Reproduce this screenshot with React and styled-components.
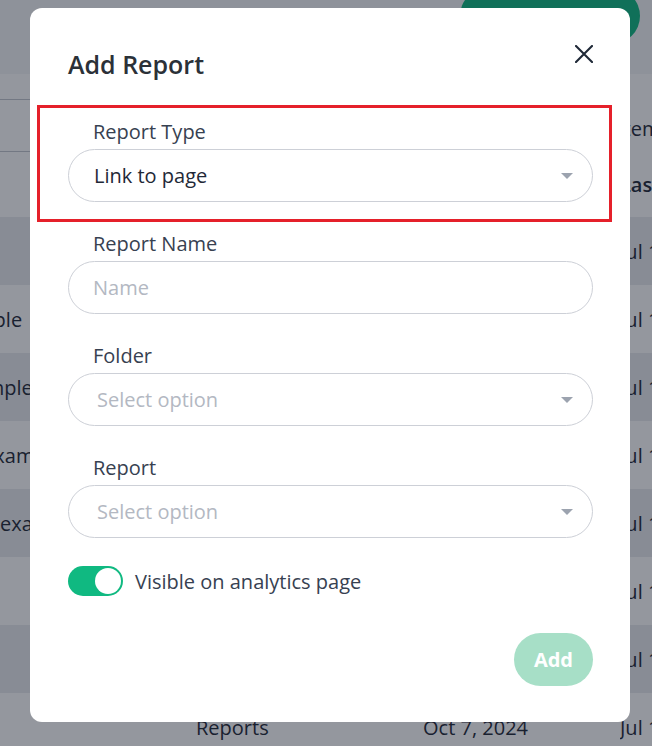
import React from 'react'
import styled, { createGlobalStyle } from 'styled-components'

const GlobalStyle = createGlobalStyle`
    * { box-sizing: border-box; }
    body {
        margin: 0;
        font-family: "Open Sans", "Noto Sans", sans-serif;
        background: #ffffff;
        color: #1f2937;
        overflow: hidden;
    }
`

const rows = [
    { name: '', folder: 'Reports', created: 'Oct 7, 2024', modified: 'Jul 12, 2024' },
    { name: 'Sample', folder: 'Reports', created: 'Oct 7, 2024', modified: 'Jul 12, 2024' },
    { name: 'Example', folder: 'Reports', created: 'Oct 7, 2024', modified: 'Jul 12, 2024' },
    { name: 'An example', folder: 'Reports', created: 'Oct 7, 2024', modified: 'Jul 12, 2024' },
    { name: 'New example', folder: 'Reports', created: 'Oct 7, 2024', modified: 'Jul 12, 2024' },
    { name: '', folder: 'Reports', created: 'Oct 7, 2024', modified: 'Jul 12, 2024' },
    { name: '', folder: 'Reports', created: 'Oct 7, 2024', modified: 'Jul 12, 2024' },
    { name: '', folder: 'Reports', created: 'Oct 7, 2024', modified: 'Jul 12, 2024' },
]

const Caret = () => (
    <svg width="12" height="6" viewBox="0 0 12 6">
        <path d="M0 0 H12 L6 6 Z" fill="#9ca3af" />
    </svg>
)

const CloseIcon = () => (
    <svg width="18" height="18" viewBox="0 0 18 18">
        <path d="M1 1 L17 17 M17 1 L1 17" stroke="#1f2937" strokeWidth="2.1" strokeLinecap="round" />
    </svg>
)

const App = () => {
    return (
        <>
            <GlobalStyle />
            <Page>
                <TopBar>
                    <NewButton>New Report</NewButton>
                </TopBar>
                <Toolbar>
                    <SearchBox />
                    <ToolbarMeta>Items</ToolbarMeta>
                </Toolbar>
                <Table>
                    <HeaderRow>
                        <Cell>Title</Cell>
                        <Cell>Folder</Cell>
                        <Cell>Created</Cell>
                        <Cell>Last Modified</Cell>
                    </HeaderRow>
                    {rows.map((row, i) => (
                        <Row key={i} $striped={i % 2 === 0}>
                            <Cell>{row.name}</Cell>
                            <Cell>{row.folder}</Cell>
                            <Cell>{row.created}</Cell>
                            <Cell>{row.modified}</Cell>
                        </Row>
                    ))}
                </Table>
            </Page>

            <Overlay>
                <Dialog>
                    <CloseButton aria-label="Close">
                        <CloseIcon />
                    </CloseButton>
                    <Title>Add Report</Title>
                    <Form>
                        <Field $highlight>
                            <Label>Report Type</Label>
                            <SelectBox>
                                <SelectValue>Link to page</SelectValue>
                                <Caret />
                            </SelectBox>
                        </Field>
                        <Field>
                            <Label>Report Name</Label>
                            <TextInput placeholder="Name" />
                        </Field>
                        <Field>
                            <Label>Folder</Label>
                            <SelectBox>
                                <SelectValue $empty>Select option</SelectValue>
                                <Caret />
                            </SelectBox>
                        </Field>
                        <Field>
                            <Label>Report</Label>
                            <SelectBox>
                                <SelectValue $empty>Select option</SelectValue>
                                <Caret />
                            </SelectBox>
                        </Field>
                    </Form>
                    <ToggleRow>
                        <Switch $on>
                            <Knob />
                        </Switch>
                        <ToggleText>Visible on analytics page</ToggleText>
                    </ToggleRow>
                    <Footer>
                        <AddButton disabled>Add</AddButton>
                    </Footer>
                </Dialog>
            </Overlay>
        </>
    )
}

export default App

// page behind the dialog

const Page = styled.div`
    width: 100%;
    min-height: 100vh;
    font-size: 20px;
`
const TopBar = styled.div`
    height: 74px;
    background-color: #f5f6f8;
    display: flex;
    justify-content: flex-end;
    align-items: flex-start;
    padding-right: 12px;
`
const NewButton = styled.div`
    width: 180px;
    height: 56px;
    margin-top: -12px;
    border-radius: 28px;
    background-color: #10b981;
    color: #ffffff;
    font-weight: 600;
    display: flex;
    align-items: center;
    justify-content: center;
`
const Toolbar = styled.div`
    height: 78px;
    padding-top: 25px;
    display: grid;
    grid-template-columns: 560px 1fr;
    background-color: #ffffff;
`
const SearchBox = styled.div`
    height: 53px;
    border-top: 1px solid #c4c7ce;
    border-bottom: 1px solid #c4c7ce;
`
const ToolbarMeta = styled.div`
    padding: 16px 0 0 58px;
    line-height: 28px;
`
const Table = styled.div`
    margin-left: -47px;
`
const HeaderRow = styled.div`
    height: 65px;
    display: grid;
    grid-template-columns: 243px 227px 197px 1fr;
    align-items: center;
    font-weight: 600;
    background-color: #ffffff;
`
const Row = styled.div`
    height: 68px;
    display: grid;
    grid-template-columns: 243px 227px 197px 1fr;
    align-items: center;
    background-color: ${p => (p.$striped ? '#eaecef' : '#ffffff')};
`
const Cell = styled.div`
    white-space: nowrap;
    overflow: hidden;
`

// dialog

const Overlay = styled.div`
    position: fixed;
    inset: 0;
    background-color: rgba(17, 24, 39, 0.45);
    display: flex;
    align-items: flex-start;
    padding: 8px 0 0 30px;
`
const Dialog = styled.div`
    position: relative;
    width: 600px;
    background-color: #ffffff;
    border-radius: 12px;
    padding: 40px 37px 36px 38px;
    display: flex;
    flex-direction: column;
`
const CloseButton = styled.button`
    position: absolute;
    top: 37px;
    right: 37px;
    width: 18px;
    height: 18px;
    padding: 0;
    border: none;
    background: none;
    display: flex;
    cursor: pointer;
`
const Title = styled.h2`
    margin: 0;
    font-size: 25px;
    line-height: 33px;
    font-weight: 600;
    color: #2b3138;
`
const Form = styled.div`
    margin-top: 38px;
    display: flex;
    flex-direction: column;
    gap: 29px;
`
const Field = styled.div`
    position: relative;
    display: flex;
    flex-direction: column;
    gap: 4px;

    ${p => p.$highlight && `
        &::after {
            content: '';
            position: absolute;
            top: -14px;
            left: -31px;
            right: -19px;
            bottom: -20px;
            border: 3px solid #e5202a;
            pointer-events: none;
        }
    `}
`
const Label = styled.label`
    padding-left: 25px;
    font-size: 20px;
    line-height: 26px;
    color: #374151;
`
const TextInput = styled.input`
    height: 53px;
    width: 100%;
    border: 1px solid #cdd0d7;
    border-radius: 27px;
    padding: 0 24px;
    font-family: inherit;
    font-size: 20px;
    color: #1f2937;
    outline: none;

    &::placeholder {
        color: #b3b8c2;
    }
`
const SelectBox = styled.div`
    height: 53px;
    border: 1px solid #cdd0d7;
    border-radius: 27px;
    padding: 0 19px 0 25px;
    display: flex;
    align-items: center;
    justify-content: space-between;
    cursor: pointer;
`
const SelectValue = styled.span`
    font-size: 20px;
    color: ${p => (p.$empty ? '#b3b8c2' : '#1f2937')};
    padding-left: ${p => (p.$empty ? '3px' : '0')};
`
const ToggleRow = styled.div`
    margin-top: 28px;
    display: flex;
    align-items: center;
    gap: 12px;
`
const Switch = styled.div`
    width: 55px;
    height: 30px;
    border-radius: 15px;
    padding: 2px;
    display: flex;
    justify-content: ${p => (p.$on ? 'flex-end' : 'flex-start')};
    background-color: ${p => (p.$on ? '#10b981' : '#d1d5db')};
`
const Knob = styled.div`
    width: 26px;
    height: 26px;
    border-radius: 50%;
    background-color: #ffffff;
`
const ToggleText = styled.span`
    font-size: 20px;
    color: #374151;
`
const Footer = styled.div`
    margin-top: 37px;
    display: flex;
    justify-content: flex-end;
`
const AddButton = styled.button`
    height: 53px;
    padding: 0 20px;
    border: none;
    border-radius: 27px;
    background-color: #a7dfc7;
    color: #ffffff;
    font-family: inherit;
    font-size: 20px;
    font-weight: 700;
`
